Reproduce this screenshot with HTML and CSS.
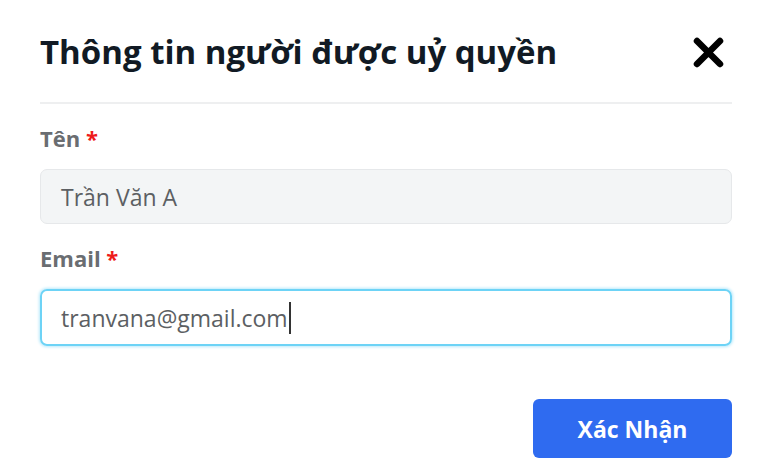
FILE: index.html
```html
<!DOCTYPE html>
<html lang="vi">
<head>
<meta charset="utf-8">
<link rel="stylesheet" href="styles.css">
</head>
<body>
<div class="modal">
  <div class="header">
    <h1 class="title">Thông tin người được uỷ quyền</h1>
    <button class="close" aria-label="Đóng">
      <svg width="31" height="31" viewBox="0 0 31 31"><path d="M4 4 L27 27 M27 4 L4 27" stroke="#000" stroke-width="6.5" stroke-linecap="round"/></svg>
    </button>
  </div>
  <div class="divider"></div>
  <div class="field">
    <label class="label">Tên <span class="req">*</span></label>
    <div class="input input-filled">Trần Văn A</div>
  </div>
  <div class="field">
    <label class="label">Email <span class="req">*</span></label>
    <div class="input input-focus">tranvana@gmail.com<span class="caret"></span></div>
  </div>
  <div class="footer">
    <button class="btn">Xác Nhận</button>
  </div>
</div>
</body>
</html>
```
FILE: styles.css
```css
* { box-sizing: border-box; }
html, body { margin: 0; padding: 0; background: #fff; }
body { font-family: "Open Sans", "Noto Sans", sans-serif; width: 768px; height: 476px; overflow: hidden; }
.modal { padding: 0 36px 0 40px; }
.header { display: flex; align-items: center; justify-content: space-between; height: 102px; padding-top: 2px; }
.title { margin: 0; font-size: 33px; font-weight: 700; color: #111a24; letter-spacing: 0; line-height: 44px; }
.close { border: 0; background: none; padding: 0; margin-right: 8px; width: 31px; height: 31px; display: flex; }
.divider { height: 2px; background: #eeeff0; }
.field { display: flex; flex-direction: column; }
.label { font-size: 22px; font-weight: 700; color: #6a6d71; margin-top: 19px; height: 30px; line-height: 30px; }
.req { color: #ee1b1b; }
.input { height: 55px; border-radius: 7px; margin-top: 16px; padding-left: 20px; display: flex; align-items: center; font-size: 23px; color: #5c5f63; }
.input-filled { background: #f3f5f6; border: 1px solid #e6e8ea; }
.input-focus { height: 57px; border: 2px solid #6dd3f6; box-shadow: 0 0 3px 1px #b8e9fb; padding-left: 19px; }
.caret { display: inline-block; width: 2px; height: 32px; background: #333; margin-left: 1px; }
.footer { display: flex; justify-content: flex-end; margin-top: 53px; }
.btn { width: 199px; height: 59px; border: 0; border-radius: 6px; background: #2f6bf0; color: #fff; font-family: inherit; font-size: 23px; font-weight: 700; }
```
